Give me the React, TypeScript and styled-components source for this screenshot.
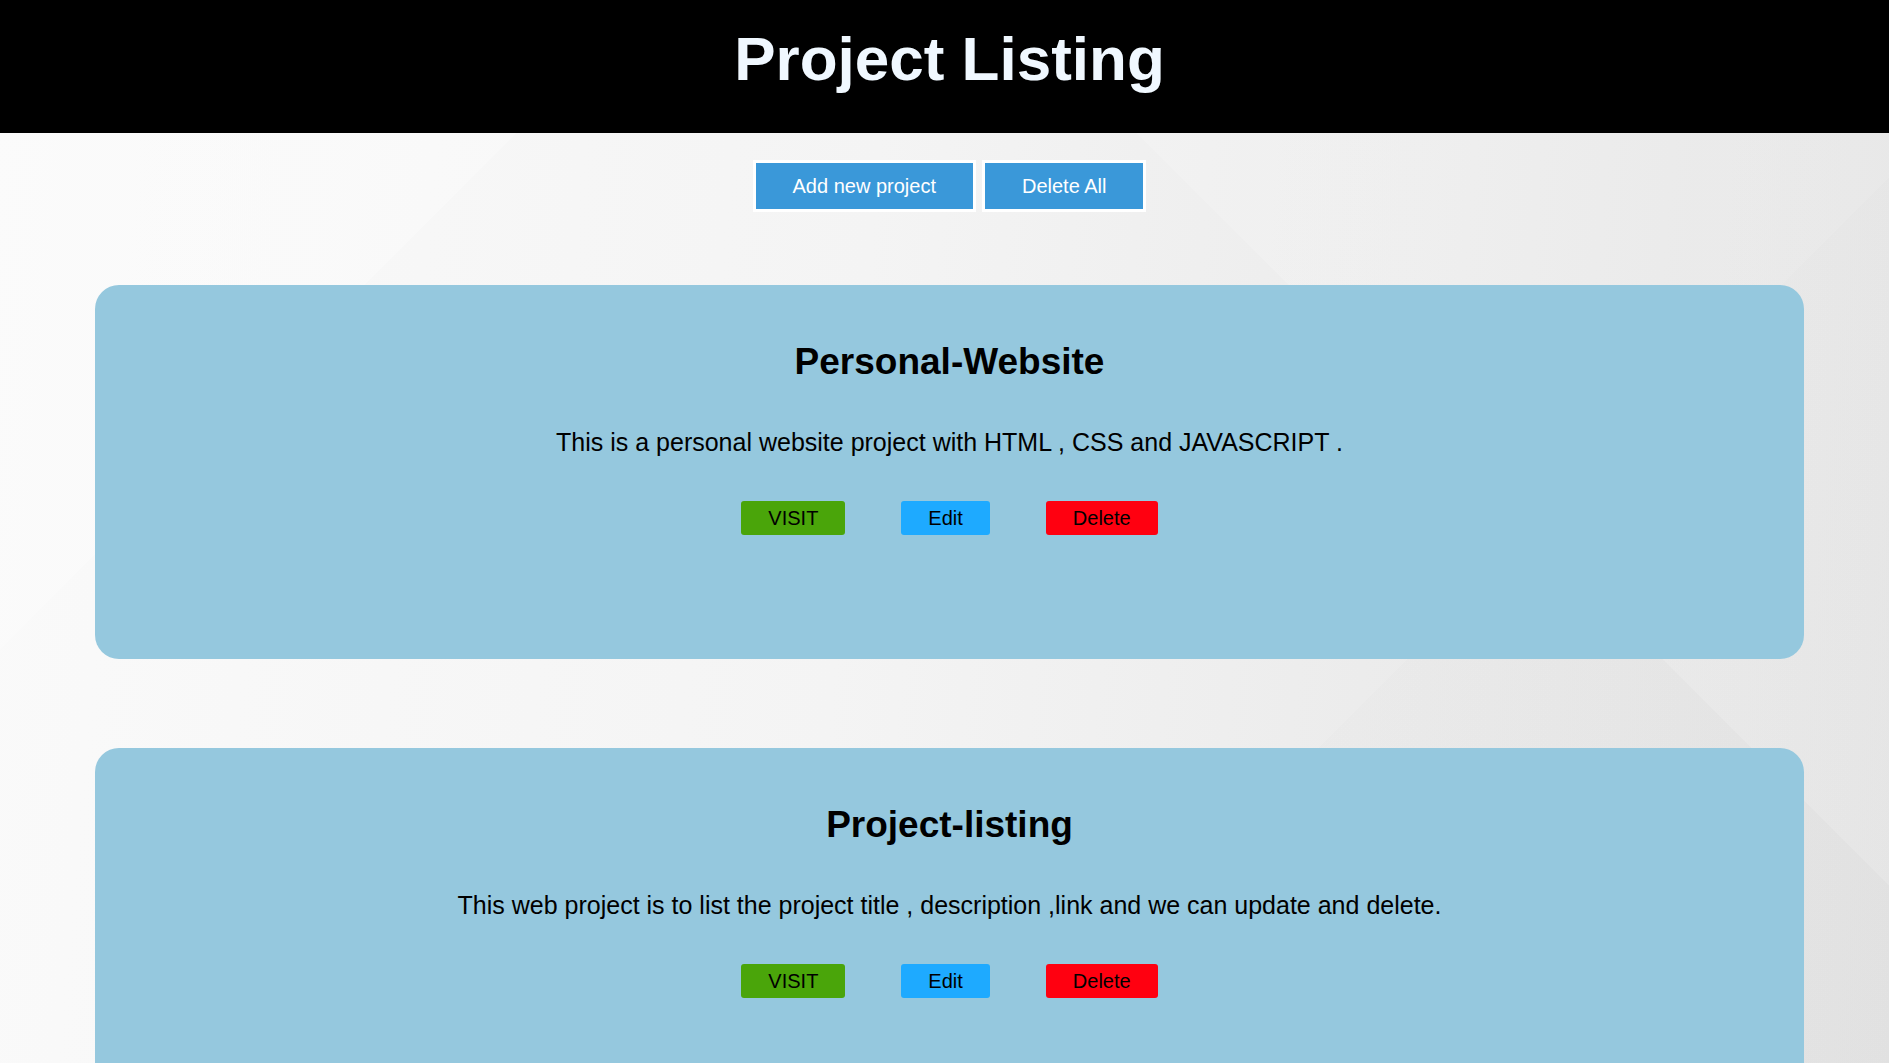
import styled, { createGlobalStyle } from "styled-components";

type Project = {
  title: string;
  description: string;
};

const projects: Project[] = [
  {
    title: "Personal-Website",
    description:
      "This is a personal website project with HTML , CSS and JAVASCRIPT .",
  },
  {
    title: "Project-listing",
    description:
      "This web project is to list the project title , description ,link and we can update and delete.",
  },
];

const GlobalStyle = createGlobalStyle`
  * {
    box-sizing: border-box;
  }

  body {
    margin: 0;
    font-family: "Liberation Sans", Arial, sans-serif;
    background-color: #efefef;
    background-image:
      linear-gradient(135deg, rgba(255, 255, 255, 0.25) 22%, transparent 22%),
      linear-gradient(225deg, rgba(255, 255, 255, 0.15) 30%, transparent 30%),
      linear-gradient(315deg, rgba(0, 0, 0, 0.008) 30%, transparent 30%),
      linear-gradient(95deg, #fafafa 0%, #f4f4f4 45%, #e8e8e8 85%, #e3e3e3 100%);
    background-attachment: fixed;
    min-height: 100vh;
  }
`;

export default function App() {
  return (
    <>
      <GlobalStyle />
      <Header>
        <Title>Project Listing</Title>
      </Header>

      <Main>
        {/* Acciones generales */}
        <Toolbar>
          <ToolbarButton>Add new project</ToolbarButton>
          <ToolbarButton>Delete All</ToolbarButton>
        </Toolbar>

        {/* Lista de proyectos */}
        <CardList>
          {projects.map((p) => (
            <Card key={p.title}>
              <CardTitle>{p.title}</CardTitle>
              <CardText>{p.description}</CardText>
              <CardActions>
                <ActionButton $color="#4aa50a">VISIT</ActionButton>
                <ActionButton $color="#1eaaff">Edit</ActionButton>
                <ActionButton $color="#ff0010">Delete</ActionButton>
              </CardActions>
            </Card>
          ))}
        </CardList>
      </Main>
    </>
  );
}

const Header = styled.header`
  background: #000;
  height: 133px;
  padding: 23px 0 0 10px;
  text-align: center;
`;

const Title = styled.h1`
  margin: 0;
  font-size: 62px;
  line-height: 71px;
  font-weight: bold;
  color: #f0f8ff;
`;

const Main = styled.main`
  padding: 27px 85px 40px 95px;
`;

const Toolbar = styled.div`
  display: flex;
  justify-content: center;
  gap: 6px;
`;

const ToolbarButton = styled.button`
  font-family: "Liberation Sans", Arial, sans-serif;
  font-size: 20px;
  line-height: 24px;
  padding: 11px 37px;
  color: #fff;
  background: #3a98d9;
  border: 3px solid #fff;
  border-radius: 0;
  cursor: pointer;
`;

const CardList = styled.div`
  display: flex;
  flex-direction: column;
  gap: 89px;
  margin-top: 73px;
`;

const Card = styled.section`
  background: #95c8de;
  border-radius: 24px;
  padding: 56px 20px 124px;
  text-align: center;
`;

const CardTitle = styled.h2`
  margin: 0;
  font-size: 37px;
  line-height: 42px;
  font-weight: bold;
  color: #000;
`;

const CardText = styled.p`
  margin: 45px 0 0;
  font-size: 25px;
  line-height: 29px;
  color: #000;
`;

const CardActions = styled.div`
  display: flex;
  justify-content: center;
  gap: 56px;
  margin-top: 44px;
`;

const ActionButton = styled.button<{ $color: string }>`
  font-family: "Liberation Sans", Arial, sans-serif;
  font-size: 20px;
  line-height: 24px;
  padding: 5px 27px;
  color: #000;
  background: ${({ $color }) => $color};
  border: none;
  border-radius: 3px;
  cursor: pointer;
`;
